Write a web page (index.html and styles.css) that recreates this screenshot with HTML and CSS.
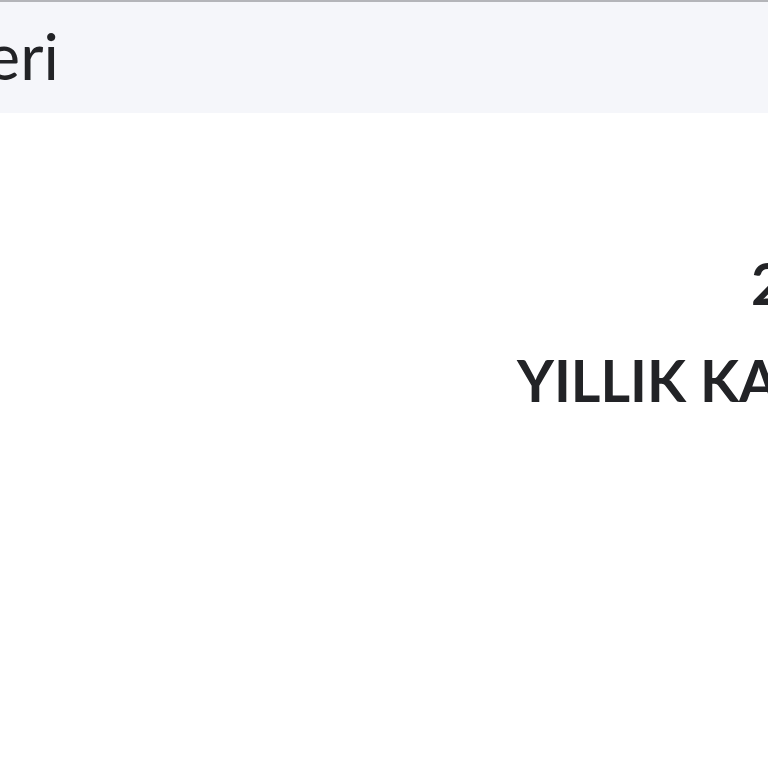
FILE: index.html
```html
<!DOCTYPE html>
<html lang="tr">
  <head>
    <meta charset="UTF-8" />
    <meta name="viewport" content="width=device-width, initial-scale=1.0" />
    <title>Geri</title>
    <link rel="stylesheet" href="styles.css">
  </head>
  <body>
    <div class="topbar">
      <span class="back">Geri</span>
    </div>
    <div class="main">
      <div class="count">2</div>
      <div class="title">YILLIK KAMPANYA</div>
    </div>
  </body>
</html>
```

FILE: styles.css
```css
body {
  margin: 0;
  width: 768px;
  height: 768px;
  overflow: hidden;
  background: #ffffff;
  font-family: Lato, "Open Sans", sans-serif;
  color: #222326;
}

.topbar {
  height: 111px;
  background: #f5f6fa;
  border-top: 2px solid #b4b5b9;
  display: flex;
  align-items: flex-start;
  white-space: nowrap;
}

.back {
  font-size: 64px;
  line-height: 1;
  margin-top: 22px;
  margin-left: -60px;
}

.main {
  padding-top: 142px;
  white-space: nowrap;
}

.count {
  font-size: 57px;
  font-weight: 700;
  line-height: 1;
  padding-left: 751px;
}

.title {
  font-size: 57px;
  font-weight: 700;
  line-height: 1;
  padding-left: 517px;
  margin-top: 40px;
}
```
